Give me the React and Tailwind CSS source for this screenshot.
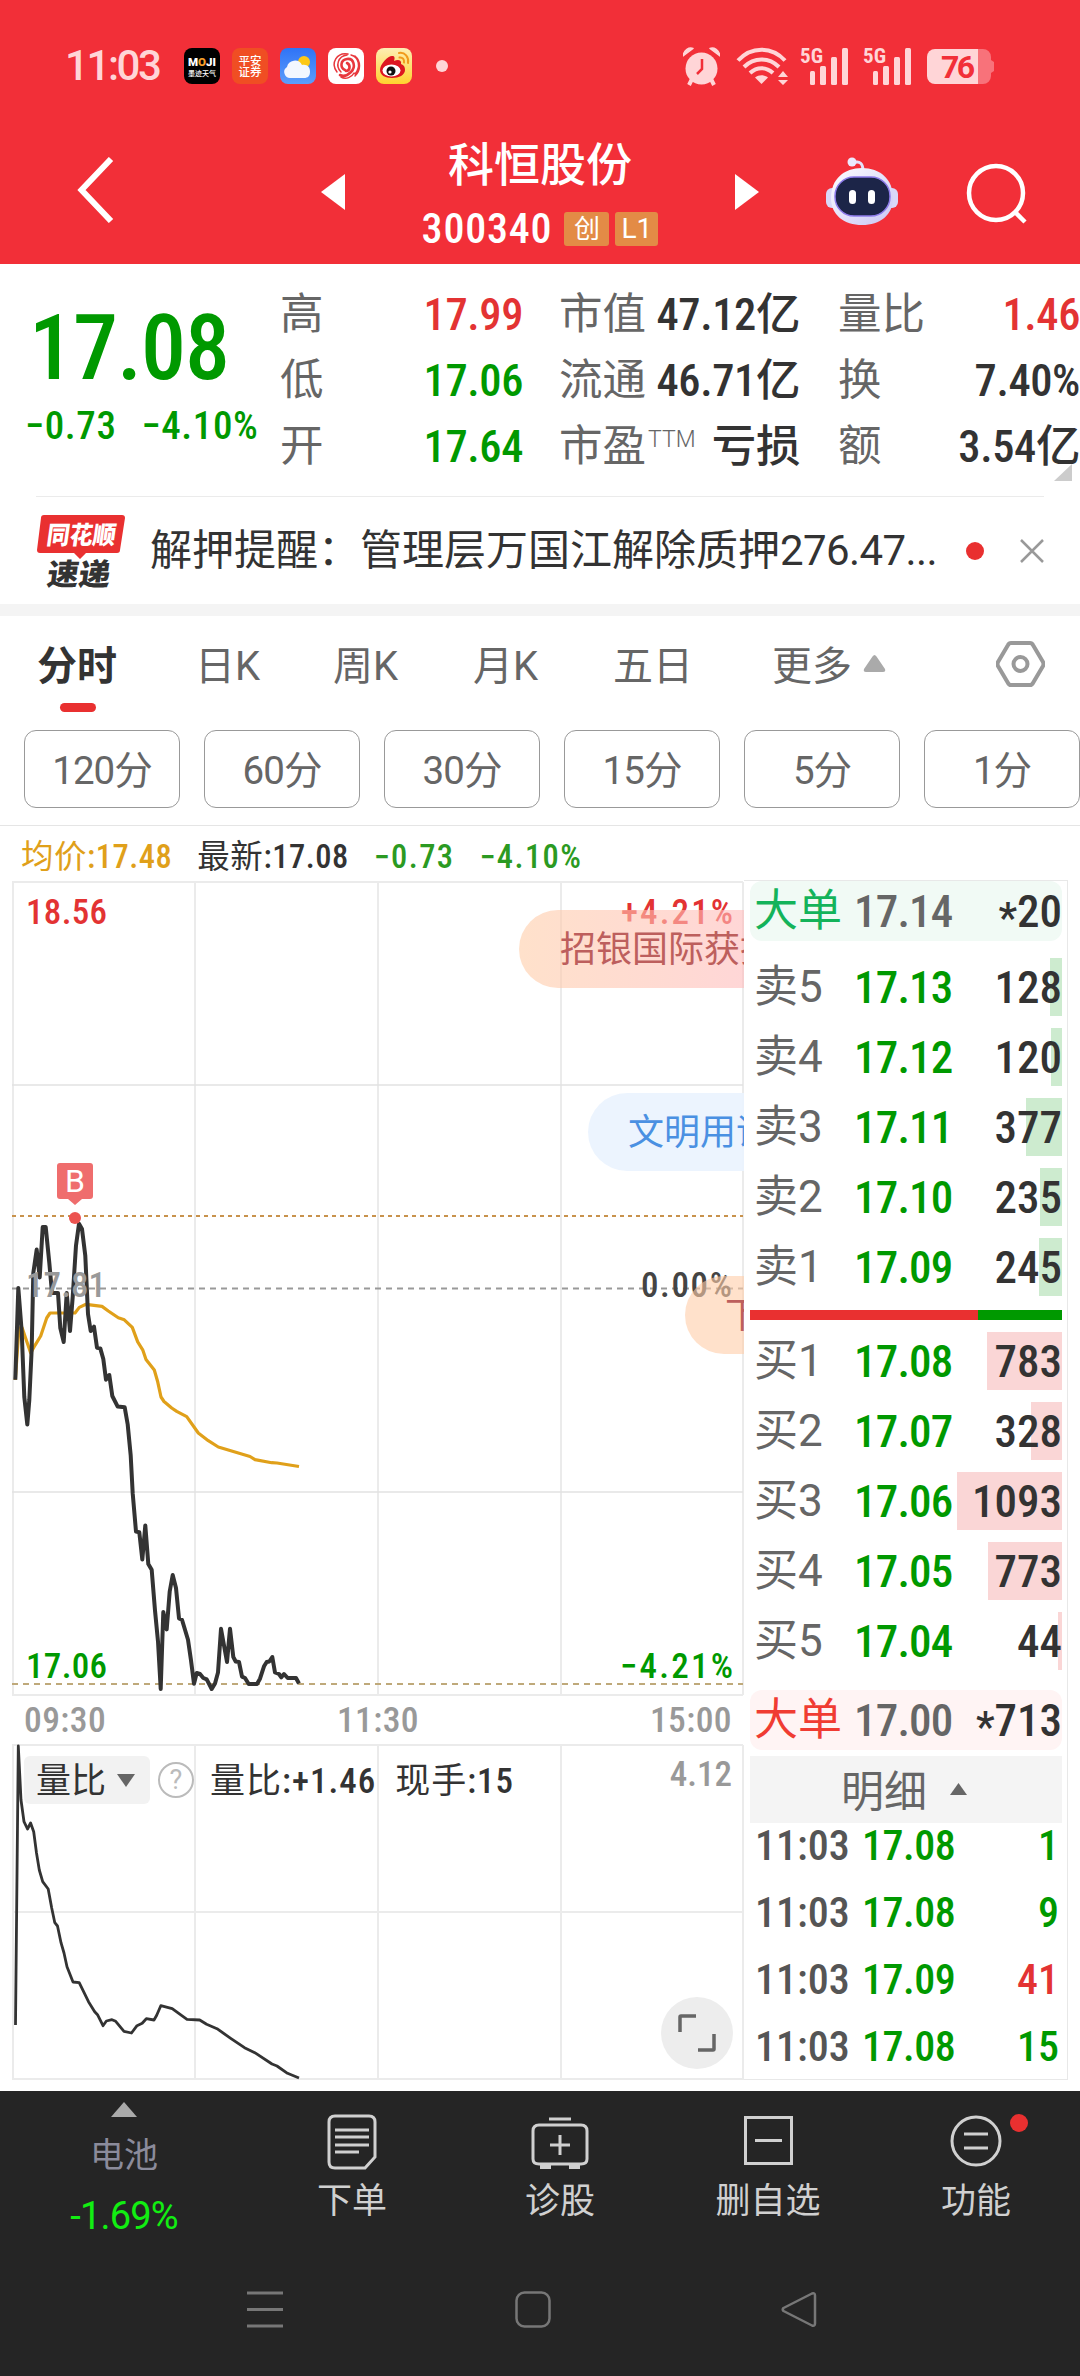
import React from 'react';

const sells = [
  { label: '卖5', price: '17.13', qty: 128, bar: 12 },
  { label: '卖4', price: '17.12', qty: 120, bar: 11 },
  { label: '卖3', price: '17.11', qty: 377, bar: 36 },
  { label: '卖2', price: '17.10', qty: 235, bar: 22 },
  { label: '卖1', price: '17.09', qty: 245, bar: 23 },
];

const buys = [
  { label: '买1', price: '17.08', qty: 783, bar: 75 },
  { label: '买2', price: '17.07', qty: 328, bar: 31 },
  { label: '买3', price: '17.06', qty: 1093, bar: 105 },
  { label: '买4', price: '17.05', qty: 773, bar: 74 },
  { label: '买5', price: '17.04', qty: 44, bar: 4 },
];

const ticks = [
  { time: '11:03', price: '17.08', qty: 1, color: 'text-[#009900]' },
  { time: '11:03', price: '17.08', qty: 9, color: 'text-[#009900]' },
  { time: '11:03', price: '17.09', qty: 41, color: 'text-[#e33333]' },
  { time: '11:03', price: '17.08', qty: 15, color: 'text-[#009900]' },
];

const pricePoints =
  '15.3,1379.7 18.3,1288 21.7,1331.5 24.3,1397 27.3,1424.5 29.3,1400 31.7,1349 33.3,1273 36.7,1249.6 39.7,1277.5 42.7,1227 45.7,1227 49.3,1262.7 52,1293 58,1293 60.3,1328 63.7,1342 66.7,1293 70,1331 72.7,1297 76,1245.4 79,1223.7 82,1229 85.3,1255.8 88,1314 90.7,1331 94,1326.7 97,1347.7 100.3,1348.4 103.3,1359 106,1379.7 109.3,1375 112.3,1396 117.7,1406.6 124.7,1407.3 127.7,1424.5 130.7,1455.5 132.7,1493.4 136,1531.6 139.3,1532.3 142.3,1559.5 145.3,1525.4 148.3,1564 151.7,1569.8 155,1610.5 158,1641.5 160.7,1689 163.3,1612 166.7,1629.4 169.7,1591.5 172.7,1575 176,1588 179,1618.4 182,1619.8 188,1639.8 191,1660.4 194,1683.8 196.7,1673 200,1674 203.3,1678 206.7,1679.4 211.7,1689 215,1683.5 218,1672.5 221,1628.8 227,1662 230,1628.8 233.3,1657 235.7,1661.5 239,1662 242,1676.6 245,1678 248.7,1684 257,1684 260,1678.7 264,1666.3 266.7,1662 269.3,1661.5 272.3,1657 275,1672.5 279,1674 281.3,1677.3 284,1674 287.7,1678 296,1678 299,1683.5';

const avgPoints =
  '15.3,1380 19,1328 22,1327.5 30.7,1353 35,1345.3 40.7,1336 46.7,1318 50,1313 75,1313 79.3,1307.4 86,1304.3 102,1306.4 108.3,1311 118.3,1317.8 124.3,1319.8 132.3,1327.4 137.7,1341.9 142.7,1349.8 146,1359.4 154.3,1370 157.7,1381.8 161,1397 164,1401.5 171.7,1408 176.7,1411.4 186.7,1416.6 198.3,1433 208.3,1440.7 218.3,1447 250,1456.5 255,1459.6 271.7,1462.7 277,1463 299,1466.5';

const ratioPoints =
  '15.5,2025 18.3,1746 21,1800 24,1821.7 27.5,1829 30.6,1823 33.7,1831.7 36.5,1853 39.3,1870 42.7,1881.7 48.2,1889 51.7,1908 54.8,1922.7 57.5,1926 61,1942.7 64,1953 67,1966.7 73,1982 79.2,1982.7 88.5,2001.7 94.7,2011.7 97.5,2014.7 103,2025.7 106.4,2021 112,2019.7 115.7,2021.3 124,2031.3 131.5,2033 137,2025.7 142.2,2023.3 146.3,2018.7 154,2020 156.7,2015.3 160.8,2005.7 172.2,2008.7 187,2019.3 199.7,2020 206.6,2024.3 217,2028.7 230.7,2038.3 244.5,2047.7 254.8,2052.7 272,2064 277,2066 287.5,2073.3 299,2078';

function Signal() {
  return (
    <svg className="overflow-visible" width="48" height="38" viewBox="0 0 48 38" fill="#ffd5d7">
      <text x="0" y="16" fontSize="21" fontWeight="700" textLength="23" lengthAdjust="spacingAndGlyphs" className="font-['Roboto_Condensed',sans-serif]">5G</text>
      <rect x="10" y="24" width="5" height="14" rx="1.5" />
      <rect x="20" y="19" width="6" height="19" rx="1.5" />
      <rect x="31" y="10" width="6" height="28" rx="1.5" />
      <rect x="42" y="1" width="6" height="37" rx="1.5" />
    </svg>
  );
}

function StatusBar() {
  return (
    <div className="flex h-[132px] items-center pl-[65px] pr-[86px] text-[#ffd5d7]">
      <span className="w-[119px] font-['Roboto',sans-serif] text-[42px] font-medium leading-none tracking-[-2.4px]">11:03</span>
      <div className="flex items-center gap-3">
        <svg width="36" height="36" viewBox="0 0 36 36">
          <rect width="36" height="36" rx="8" fill="#000" />
          <text x="4" y="17.500" fontSize="11" fontWeight="900" fill="#fff" textLength="28" lengthAdjust="spacingAndGlyphs" className="font-['Roboto',sans-serif]">M<tspan fill="#f7a02a">O</tspan>JI</text>
          <text x="4" y="28" fontSize="7" fontWeight="500" fill="#fff" textLength="28" className="font-['Noto_Sans_CJK_SC',sans-serif]">墨迹天气</text>
        </svg>
        <svg width="36" height="36" viewBox="0 0 36 36">
          <rect width="36" height="36" rx="8" fill="#f04e23" />
          <g fill="#fff" fontSize="11.500" fontWeight="500" className="font-['Noto_Sans_CJK_SC',sans-serif]">
            <text x="6.500" y="17">平安</text>
            <text x="6.500" y="28">证券</text>
          </g>
        </svg>
        <svg width="36" height="36" viewBox="0 0 36 36">
          <defs>
            <linearGradient id="sky" x1="0" y1="0" x2="0" y2="1">
              <stop offset="0" stopColor="#2f73f6" />
              <stop offset="1" stopColor="#5c9efb" />
            </linearGradient>
          </defs>
          <rect width="36" height="36" rx="8" fill="url(#sky)" />
          <circle cx="24" cy="14" r="6" fill="#fdc816" />
          <path d="M11 30a6 6 0 0 1-4-11 8 8 0 0 1 15-2c5-1 8 2 8 6.500S28 30 24 30z" fill="#f3f7ff" />
        </svg>
        <svg width="36" height="36" viewBox="0 0 36 36" fill="none" stroke="#e8383d" strokeLinecap="round">
          <rect width="36" height="36" rx="8" fill="#fff" stroke="none" />
          <path d="M17 22c-5-2-5-10 2-11s9 8 4 13-9 4-11 3" strokeWidth="2.600" />
          <path d="M19 15c4 2 3 8-1 8" strokeWidth="2.600" />
          <path d="M13 24c-6-6-3-16 6-17M9 24C2 15 9 4 20 6M23 7c8 2 10 12 4 19M27 8c6 5 6 14 0 20M13 29c5 3 11 0 13-4" strokeWidth="1.500" />
        </svg>
        <svg width="36" height="36" viewBox="0 0 36 36">
          <defs>
            <linearGradient id="weibo" x1="0" y1="0" x2="0" y2="1">
              <stop offset="0" stopColor="#fdeeb4" />
              <stop offset="1" stopColor="#ffd22f" />
            </linearGradient>
          </defs>
          <rect width="36" height="36" rx="8" fill="url(#weibo)" />
          <path d="M4 22c0-6 8-14 12-14 3 0 3 2 2 5 4-2 8-1 7 3 3 1 4 3 4 6 0 5-6 8-13 8S4 27 4 22z" fill="#dd1620" />
          <ellipse cx="15.500" cy="22.500" rx="9" ry="6" fill="#fff" />
          <circle cx="15" cy="23" r="4.500" fill="#111" />
          <circle cx="14" cy="24" r="1.600" fill="#fff" />
          <path d="M23 5c6-1 10 4 9 10M23.500 9.500c3-.5 5 2 4.500 5" fill="none" stroke="#f19a1c" strokeWidth="2" strokeLinecap="round" />
        </svg>
      </div>
      <span className="ml-6 h-3 w-3 rounded-full bg-[#ffd5d7]" />
      <div className="ml-auto flex items-center">
        <svg width="37" height="39" viewBox="0 0 37 39" fill="#ffd5d7">
          <circle cx="18.500" cy="21.500" r="16" />
          <path d="M0 9C1 3 6 0 10 1.500zM37 9C36 3 31 0 27 1.500z" stroke="#ffd5d7" strokeWidth="1.500" strokeLinejoin="round" />
          <path d="M9 32l-3 6M28 32l3 6" stroke="#ffd5d7" strokeWidth="4" />
          <path d="M19 12v10l-5 5" fill="none" stroke="#f22f38" strokeWidth="2.500" />
        </svg>
        <svg className="ml-4" width="52" height="38" viewBox="0 0 52 38" fill="none" stroke="#ffd5d7" strokeWidth="4">
          <path d="M2 13.500C15-1 36-1 49 13.500M8 20c10-10 25-10 35 0M14 26c7-6.500 16-6.500 23 0" />
          <path d="M19 30.500c4-3 9-3 13 0L25.500 37z" fill="#ffd5d7" stroke="none" />
          <path d="M42 30l5-6 5 6zM42 33l5 5 5-5z" fill="#ffd5d7" stroke="none" />
        </svg>
        <span className="ml-3"><Signal /></span>
        <span className="ml-[15px]"><Signal /></span>
        <svg className="ml-4 overflow-visible" width="67" height="35" viewBox="0 0 67 35">
          <path d="M51 0h5a8 8 0 0 1 8 8v3l3 2v9l-3 2v3a8 8 0 0 1-8 8h-5z" fill="#f8727a" />
          <path d="M8 0h43v35H8a8 8 0 0 1-8-8V8a8 8 0 0 1 8-8z" fill="#ffd5d7" />
          <text x="14" y="29" fontSize="32" fontWeight="700" fill="#f22f38" textLength="34" className="font-['Roboto',sans-serif]">76</text>
        </svg>
      </div>
    </div>
  );
}

function TitleBar() {
  return (
    <div className="flex h-[132px] items-start">
      <svg className="ml-[77px] mt-[25px]" width="38" height="66" viewBox="0 0 38 66" fill="none" stroke="#fff" strokeWidth="6">
        <path d="M34 2L4.500 33 34 64" />
      </svg>
      <svg className="ml-[206px] mt-[42px]" width="24" height="36" viewBox="0 0 24 36" fill="#fff"><path d="M24 0v36L0 18z" /></svg>
      <div className="mt-[4px] flex w-[390px] flex-col items-center text-white">
        <div className="font-['Roboto','Noto_Sans_CJK_SC',sans-serif] text-[46px] font-medium leading-[58px]">科恒股份</div>
        <div className="mt-[14px] flex h-[42px] items-center">
          <span className="mr-3 font-['Roboto_Condensed',sans-serif] text-[42px] font-medium leading-[42px] tracking-[0.8px]">300340</span>
          <span className="flex h-[34px] w-[45px] items-center justify-center rounded-[3px] bg-[#e38b46] font-['Roboto','Noto_Sans_CJK_SC',sans-serif] text-[26px] leading-none">创</span>
          <span className="ml-[6px] flex h-[34px] w-[43px] items-center justify-center rounded-[3px] bg-[#e38b46] font-['Roboto',sans-serif] text-[28px] leading-none">L1</span>
        </div>
      </div>
      <svg className="mt-[42px]" width="24" height="36" viewBox="0 0 24 36" fill="#fff"><path d="M0 0v36l24-18z" /></svg>
      <svg className="ml-[67px] mt-[25px]" width="72" height="70" viewBox="0 0 72 70">
        <defs>
          <linearGradient id="shell" x1="0" y1="0" x2="1" y2="1">
            <stop offset="0" stopColor="#fff" />
            <stop offset="1" stopColor="#c9c6f5" />
          </linearGradient>
        </defs>
        <path d="M27 6c7-3 10 1 10 8" fill="none" stroke="#e4e2fb" strokeWidth="3" />
        <circle cx="26" cy="5" r="4.500" fill="#eceafd" />
        <rect x="0" y="31" width="72" height="20" rx="6" fill="#d9d8f8" />
        <path d="M36 11c18 0 31 11 31 30 0 17-13 27-31 27S5 58 5 41C5 22 18 11 36 11z" fill="url(#shell)" />
        <rect x="9" y="20" width="55" height="39" rx="19" fill="#1c2548" stroke="#8d7bea" strokeWidth="1.500" />
        <rect x="23" y="33" width="7" height="14" rx="3.500" fill="#fff" />
        <rect x="42" y="33" width="7" height="14" rx="3.500" fill="#fff" />
      </svg>
      <svg className="ml-[68px] mt-[30px]" width="62" height="62" viewBox="0 0 62 62" fill="none" stroke="#fff" strokeWidth="4.500">
        <circle cx="30" cy="31" r="27" />
        <path d="M48 49l11 11" />
      </svg>
    </div>
  );
}

function Quote({ label, sup, value, color = 'text-[#333]' }) {
  return (
    <div className="flex h-[66px] items-center justify-between">
      <span className="flex items-center font-['Roboto','Noto_Sans_CJK_SC',sans-serif] text-[43.5px] leading-[66px] text-[#666]">
        {label}
        {sup && <span className="relative -top-[8px] ml-[2px] text-[23px] font-light leading-none">{sup}</span>}
      </span>
      <span className={`font-['Roboto_Condensed','Noto_Sans_CJK_SC',sans-serif] text-[44.5px] font-medium leading-[66px] tracking-[-0.4px] ${color}`}>{value}</span>
    </div>
  );
}

function QuotePanel() {
  return (
    <div className="relative flex h-[232px] pt-[18px]">
      <div className="w-[280px] font-['Roboto_Condensed',sans-serif] font-medium text-[#009900]">
        <div className="mt-[22px] pl-[29px] text-[90px] leading-[90px] tracking-[-1px]">17.08</div>
        <div className="mt-[8px] flex gap-[25px] pl-[25px] text-[39px] leading-[48px] tracking-[0.6px]">
          <span>−0.73</span>
          <span>−4.10%</span>
        </div>
      </div>
      <div className="w-[243px]">
        <Quote label="高" value="17.99" color="text-[#e33333]" />
        <Quote label="低" value="17.06" color="text-[#009900]" />
        <Quote label="开" value="17.64" color="text-[#009900]" />
      </div>
      <div className="ml-[36px] w-[241px]">
        <Quote label="市值" value="47.12亿" />
        <Quote label="流通" value="46.71亿" />
        <Quote label="市盈" sup="TTM" value="亏损" />
      </div>
      <div className="ml-[38px] w-[242px]">
        <Quote label="量比" value="1.46" color="text-[#e33333]" />
        <Quote label="换" value="7.40%" />
        <Quote label="额" value="3.54亿" />
      </div>
      <svg className="absolute right-[8px] top-[200px]" width="18" height="17" viewBox="0 0 18 17" fill="#ccc"><path d="M18 0v17H0z" /></svg>
    </div>
  );
}

function News() {
  return (
    <div className="mx-9 flex h-[108px] items-center border-t border-[#ebebeb]">
      <svg className="overflow-visible font-['Noto_Sans_CJK_SC',sans-serif]" width="90" height="74" viewBox="0 0 90 74">
        <path d="M8 1h78q3 0 3 3l-5 32q0 3-3 3H50l-6 6-6-6H4q-3 0-3-3L5 4q0-3 3-3z" fill="#e93030" />
        <g transform="skewX(-8)" fontWeight="900">
          <text x="14" y="30" fontSize="25" fill="#fff" textLength="69" lengthAdjust="spacingAndGlyphs">同花顺</text>
          <text x="20" y="71" fontSize="30" fill="#333" textLength="63" lengthAdjust="spacingAndGlyphs">速递</text>
        </g>
      </svg>
      <span className="ml-[24px] w-[800px] whitespace-nowrap font-['Roboto','Noto_Sans_CJK_SC',sans-serif] text-[42px] leading-[60px] text-[#333]">
        解押提醒：管理层万国江解除质押<span className="tracking-[-0.6px]">276.47...</span>
      </span>
      <span className="ml-4 h-[18px] w-[18px] rounded-full bg-[#e93030]" />
      <svg className="ml-auto" width="24" height="24" viewBox="0 0 24 24" stroke="#999" strokeWidth="2.500"><path d="M1 1l22 22M23 1L1 23" /></svg>
    </div>
  );
}

function Tabs() {
  return (
    <div className="flex h-[114px] items-start pl-[37px] pt-[21px] font-['Roboto','Noto_Sans_CJK_SC',sans-serif] text-[40px] leading-[60px] text-[#666]">
      <div className="flex w-[158px] flex-col items-start">
        <span className="font-bold text-[#333]">分时</span>
        <span className="ml-[23px] mt-[6px] h-[9px] w-9 rounded-full bg-[#e93030]" />
      </div>
      <span className="w-[138px]">日K</span>
      <span className="w-[140px]">周K</span>
      <span className="w-[140px]">月K</span>
      <span className="w-[159px]">五日</span>
      <span>更多</span>
      <svg className="ml-[11px] mt-[18px]" width="23" height="17" viewBox="0 0 23 17" fill="#aaa"><path d="M11.500 0q1 0 2 1.500L22 14q1 3-2 3H3q-3 0-2-3L9.500 1.500q1-1.500 2-1.500z" /></svg>
      <svg className="ml-[110px] mt-[4px]" width="49" height="46" viewBox="0 0 49 46" fill="none" stroke="#999" strokeWidth="4">
        <path d="M15 2h19q2 0 3 2l10 17q1 2 0 4L37 42q-1 2-3 2H15q-2 0-3-2L2 25q-1-2 0-4L12 4q1-2 3-2z" />
        <circle cx="24.500" cy="23" r="7" />
      </svg>
    </div>
  );
}

function Periods() {
  return (
    <div className="flex h-[96px] gap-6 border-b border-[#e5e5e5] pl-6">
      {['120分', '60分', '30分', '15分', '5分', '1分'].map((p) => (
        <div key={p} className="flex h-[78px] w-[156px] shrink-0 items-center justify-center rounded-[12px] border border-[#999] pt-[3px] font-['Roboto','Noto_Sans_CJK_SC',sans-serif] text-[38.5px] tracking-[-1px] text-[#666]">
          {p}
        </div>
      ))}
    </div>
  );
}

function PriceChart() {
  return (
    <svg className="block font-['Roboto_Condensed','Noto_Sans_CJK_SC',sans-serif]" width="744" height="816" viewBox="0 881 744 816" fontSize="35" fontWeight="500">
      <defs>
        <linearGradient id="warm" gradientUnits="userSpaceOnUse" x1="519" y1="0" x2="760" y2="0">
          <stop offset="0" stopColor="#ffcda8" />
          <stop offset="1" stopColor="#ffbabd" />
        </linearGradient>
      </defs>
      <path d="M12 882H743M12 1695H743M13 882V1695M195 882V1695M378 882V1695M561 882V1695M743 882V1695" stroke="#ebebeb" strokeWidth="2" />
      <path d="M12 1085H743M12 1492H743" stroke="#e2e2e2" strokeWidth="1.500" />
      <path d="M12 1216H743" stroke="#c8924c" strokeWidth="2" strokeDasharray="4 4" />
      <path d="M12 1288.500H743" stroke="#999" strokeWidth="2" strokeDasharray="6 5" />
      <path d="M12 1684H743" stroke="#bfa97a" strokeWidth="2" strokeDasharray="6 5" />
      <polyline points={avgPoints} fill="none" stroke="#e0a01a" strokeWidth="3.200" strokeLinejoin="round" />
      <polyline points={pricePoints} fill="none" stroke="#333" strokeWidth="4" strokeLinejoin="round" />
      <path d="M60 1163h30q3 0 3 3v30q0 3-3 3h-8l-7 6-7-6h-8q-3 0-3-3v-30q0-3 3-3z" fill="#ef6d6d" />
      <text x="75" y="1192" fontSize="32" fontWeight="400" fill="#fff" textAnchor="middle" className="font-['Roboto',sans-serif]">B</text>
      <circle cx="75" cy="1218" r="6" fill="#ec5350" />
      <text x="26" y="924" fill="#e33333" textLength="81">18.56</text>
      <text x="26" y="1297" fill="#999" textLength="80">17.81</text>
      <text x="26" y="1678" fill="#009900" textLength="81">17.06</text>
      <text x="621" y="924" fill="#e33333" textLength="112">+4.21%</text>
      <text x="641" y="1297" fill="#444" textLength="91">0.00%</text>
      <text x="620" y="1678" fill="#009900" textLength="113">−4.21%</text>
      <g className="font-['Noto_Sans_CJK_SC',sans-serif]" fontSize="36" fontWeight="400">
        <rect x="519" y="910" width="400" height="78" rx="39" fill="url(#warm)" opacity="0.600" />
        <text x="560" y="962" fill="#bd5f5d">招银国际获批</text>
        <rect x="588" y="1093" width="300" height="78" rx="39" fill="#ebf3fe" opacity="0.930" />
        <text x="628" y="1145" fill="#4a90e2">文明用语</text>
        <rect x="685" y="1276" width="300" height="78" rx="39" fill="#ffcda8" opacity="0.600" />
        <text x="725" y="1328" fill="#bd5f5d">下</text>
      </g>
    </svg>
  );
}

function RatioChart() {
  return (
    <div className="relative">
      <svg className="block" width="744" height="337" viewBox="0 1744 744 337">
        <path d="M12 1745H743M12 1912H743M12 2079H743M13 1745V2080M195 1745V2080M378 1745V2080M561 1745V2080M743 1745V2080" stroke="#ebebeb" strokeWidth="2" />
        <polyline points={ratioPoints} fill="none" stroke="#333" strokeWidth="2.800" strokeLinejoin="round" />
      </svg>
      <div className="absolute inset-x-0 top-[12px] flex h-[48px] items-center pl-[24px] pr-[12px] font-['Roboto_Condensed','Noto_Sans_CJK_SC',sans-serif] text-[35px] font-medium leading-[48px] text-[#333]">
        <div className="flex h-[48px] w-[126px] items-center rounded-[6px] bg-[#f2f2f2] pl-[12px] pt-[3px] font-normal">
          量比
          <svg className="-mt-[3px] ml-[11px]" width="18" height="13" viewBox="0 0 18 13" fill="#666"><path d="M0 0h18L9 13z" /></svg>
        </div>
        <div className="ml-[8px] flex h-9 w-9 items-center justify-center rounded-full border-2 border-[#bbb] font-['Roboto',sans-serif] text-[27px] font-normal leading-none text-[#bbb]">?</div>
        <span className="ml-[16px] pt-[3px] tracking-[1px]"><span className="font-normal">量比</span>:+1.46</span>
        <span className="ml-[19px] pt-[3px] tracking-[1px]"><span className="font-normal">现手</span>:15</span>
        <span className="-mt-[11px] ml-auto text-[#999]">4.12</span>
      </div>
      <div className="absolute bottom-[12px] right-[11px] flex h-[72px] w-[72px] items-center justify-center rounded-full bg-[#ededed]">
        <svg width="38" height="38" viewBox="0 0 38 38" fill="none" stroke="#666" strokeWidth="3.500"><path d="M2 18V3q0-1 1-1h15M20 36h15q1 0 1-1V20" /></svg>
      </div>
    </div>
  );
}

function Level({ row, tint }) {
  return (
    <div className="relative flex h-[58px] items-center">
      <div className={`absolute inset-y-0 right-0 ${tint}`} style={{ width: row.bar }} />
      <span className="relative w-[104px] pl-1 font-['Roboto','Noto_Sans_CJK_SC',sans-serif] text-[44px] text-[#666]">{row.label}</span>
      <span className="relative font-['Roboto_Condensed',sans-serif] text-[45px] font-medium tracking-[-0.8px] text-[#009900]">{row.price}</span>
      <span className="relative ml-auto font-['Roboto_Condensed',sans-serif] text-[45px] font-medium text-[#333]">{row.qty}</span>
    </div>
  );
}

function BigOrder({ box, text, price, qty }) {
  return (
    <div className={`flex h-[60px] items-center rounded-[12px] ${box}`}>
      <span className={`w-[104px] pl-1 font-['Roboto','Noto_Sans_CJK_SC',sans-serif] text-[44px] ${text}`}>大单</span>
      <span className="font-['Roboto_Condensed',sans-serif] text-[45px] font-medium tracking-[-0.8px] text-[#666]">{price}</span>
      <span className="ml-auto flex items-center font-['Roboto_Condensed',sans-serif] text-[45px] font-medium text-[#333]"><span className="relative top-[7px] text-[42px]">*</span>{qty}</span>
    </div>
  );
}

function OrderBook() {
  return (
    <div className="h-[1200px] w-[324px] border border-l-0 border-[#e8e8e8] pl-[6px] pr-[5px] leading-none">
      <BigOrder box="bg-[#f1faf5]" text="text-[#14b35a]" price="17.14" qty="20" />
      <div className="mt-[17px] flex flex-col gap-3">
        {sells.map((r) => <Level key={r.label} row={r} tint="bg-[#cdebcf]" />)}
      </div>
      <div className="mt-[14px] flex h-[10px]">
        <div className="w-[228px] bg-[#e93030]" />
        <div className="flex-1 bg-[#009900]" />
      </div>
      <div className="mt-3 flex flex-col gap-3">
        {buys.map((r) => <Level key={r.label} row={r} tint="bg-[#fad6d6]" />)}
      </div>
      <div className="mt-[20px]">
        <BigOrder box="bg-[#fff4f4]" text="text-[#f03c32]" price="17.00" qty="713" />
      </div>
      <div className="mt-[6px] flex h-[67px] items-center bg-[#f4f4f4] pl-[91px] pt-[5px] font-['Roboto','Noto_Sans_CJK_SC',sans-serif] text-[43px] text-[#666]">
        明细
        <svg className="-mt-[7px] ml-[23px]" width="17" height="12" viewBox="0 0 17 12" fill="#666"><path d="M8.500 0L17 12H0z" /></svg>
      </div>
      <div className="-mt-[11px] font-['Roboto_Condensed',sans-serif] text-[42px] font-medium">
        {ticks.map((t, i) => (
          <div key={i} className="flex h-[67px] items-center pl-[5px] pr-[3px]">
            <span className="w-[107px] text-[#555]">{t.time}</span>
            <span className="tracking-[-0.5px] text-[#009900]">{t.price}</span>
            <span className={`ml-auto ${t.color}`}>{t.qty}</span>
          </div>
        ))}
      </div>
    </div>
  );
}

function Action({ label, children }) {
  return (
    <div className="flex w-[208px] flex-col items-center">
      <div className="flex h-[76px] items-end justify-center">{children}</div>
      <span className="mt-[15px] text-[35px] leading-[40px] text-[#d0d0d0]">{label}</span>
    </div>
  );
}

function BottomBar() {
  return (
    <div className="h-[285px] bg-[#252525] font-['Roboto','Noto_Sans_CJK_SC',sans-serif]">
      <div className="flex h-[182px]">
        <div className="flex w-[248px] flex-col items-center pt-[11px]">
          <svg width="26" height="15" viewBox="0 0 26 15" fill="#aaa"><path d="M13 0l13 15H0z" /></svg>
          <span className="mt-[18px] text-[34px] leading-[40px] text-[#8b8b9b]">电池</span>
          <span className="mt-[21px] text-[38px] leading-[40px] tracking-[-0.8px] text-[#12ee12]">-1.69%</span>
        </div>
        <Action label="下单">
          <svg className="mb-[-3px]" width="50" height="56" viewBox="0 0 50 56" fill="none" stroke="#d0d0d0" strokeWidth="3">
            <path d="M8 2h34q6 0 6 6v35L38 54H8q-6 0-6-6V8q0-6 6-6zM8 16h34M8 23h34M8 31h34M8 38h24" />
          </svg>
        </Action>
        <Action label="诊股">
          <svg className="mb-[-2px]" width="58" height="52" viewBox="0 0 58 52" fill="none" stroke="#d0d0d0" strokeWidth="3">
            <path d="M18 2h22M8 8h42q6 0 6 6v28q0 5-6 5H8q-6 0-6-5V14q0-6 6-6zM29 18v20M19 28h20" />
            <path d="M9 50h11M38 50h11" strokeWidth="4" />
          </svg>
        </Action>
        <Action label="删自选">
          <svg className="mb-[2px]" width="49" height="49" viewBox="0 0 49 49" fill="none" stroke="#d0d0d0" strokeWidth="3">
            <path d="M1.500 1.500h46v46h-46zM11 24.500h27" />
          </svg>
        </Action>
        <Action label="功能">
          <div className="relative">
            <svg width="52" height="52" viewBox="0 0 52 52" fill="none" stroke="#d0d0d0" strokeWidth="3">
              <circle cx="26" cy="26" r="24" />
              <path d="M14 19h24M14 33h24" />
            </svg>
            <span className="absolute -right-[26px] -top-[1px] h-[18px] w-[18px] rounded-full bg-[#e93030]" />
          </div>
        </Action>
      </div>
      <div className="flex items-center pl-[247px] pt-[18px]">
        <svg width="36" height="37" viewBox="0 0 36 37" stroke="#777" strokeWidth="3"><path d="M0 2h36M0 18.500h36M0 35h36" /></svg>
        <svg className="ml-[232px]" width="36" height="37" viewBox="0 0 36 37" fill="none" stroke="#777" strokeWidth="2.500"><rect x="1.500" y="1.500" width="33" height="34" rx="8" /></svg>
        <svg className="ml-[230px]" width="36" height="37" viewBox="0 0 36 37" fill="none" stroke="#777" strokeWidth="2.500" strokeLinejoin="round"><path d="M31 2.500L2.500 17q-1.500 1.500 0 3L31 34.500q3 1 3-2v-28q0-3-3-2z" /></svg>
      </div>
    </div>
  );
}

export default function App() {
  return (
    <div className="flex h-[2376px] w-[1080px] flex-col overflow-hidden bg-white">
      <header className="h-[264px] bg-[#f22f38]">
        <StatusBar />
        <TitleBar />
      </header>
      <QuotePanel />
      <News />
      <div className="h-3 bg-[#f4f4f4]" />
      <Tabs />
      <Periods />
      <div className="flex h-[54px] items-center gap-[25px] pl-[21px] pt-[9px] font-['Roboto_Condensed','Noto_Sans_CJK_SC',sans-serif] text-[32.5px] font-medium tracking-[0.5px]">
        <span className="text-[#e0a01a]"><span className="font-normal">均价</span>:17.48</span>
        <span className="text-[#333]"><span className="font-normal">最新</span>:17.08</span>
        <span className="tracking-[1.4px] text-[#2b9a22]">−0.73</span>
        <span className="tracking-[1.4px] text-[#2b9a22]">−4.10%</span>
      </div>
      <div className="flex h-[1211px]">
        <div className="w-[744px] pt-px">
          <PriceChart />
          <div className="flex h-[47px] items-center justify-between pl-[24px] pr-[12px] font-['Roboto_Condensed',sans-serif] text-[35.5px] font-medium tracking-[0.4px] text-[#999]">
            <span>09:30</span>
            <span>11:30</span>
            <span>15:00</span>
          </div>
          <RatioChart />
        </div>
        <OrderBook />
      </div>
      <BottomBar />
    </div>
  );
}
